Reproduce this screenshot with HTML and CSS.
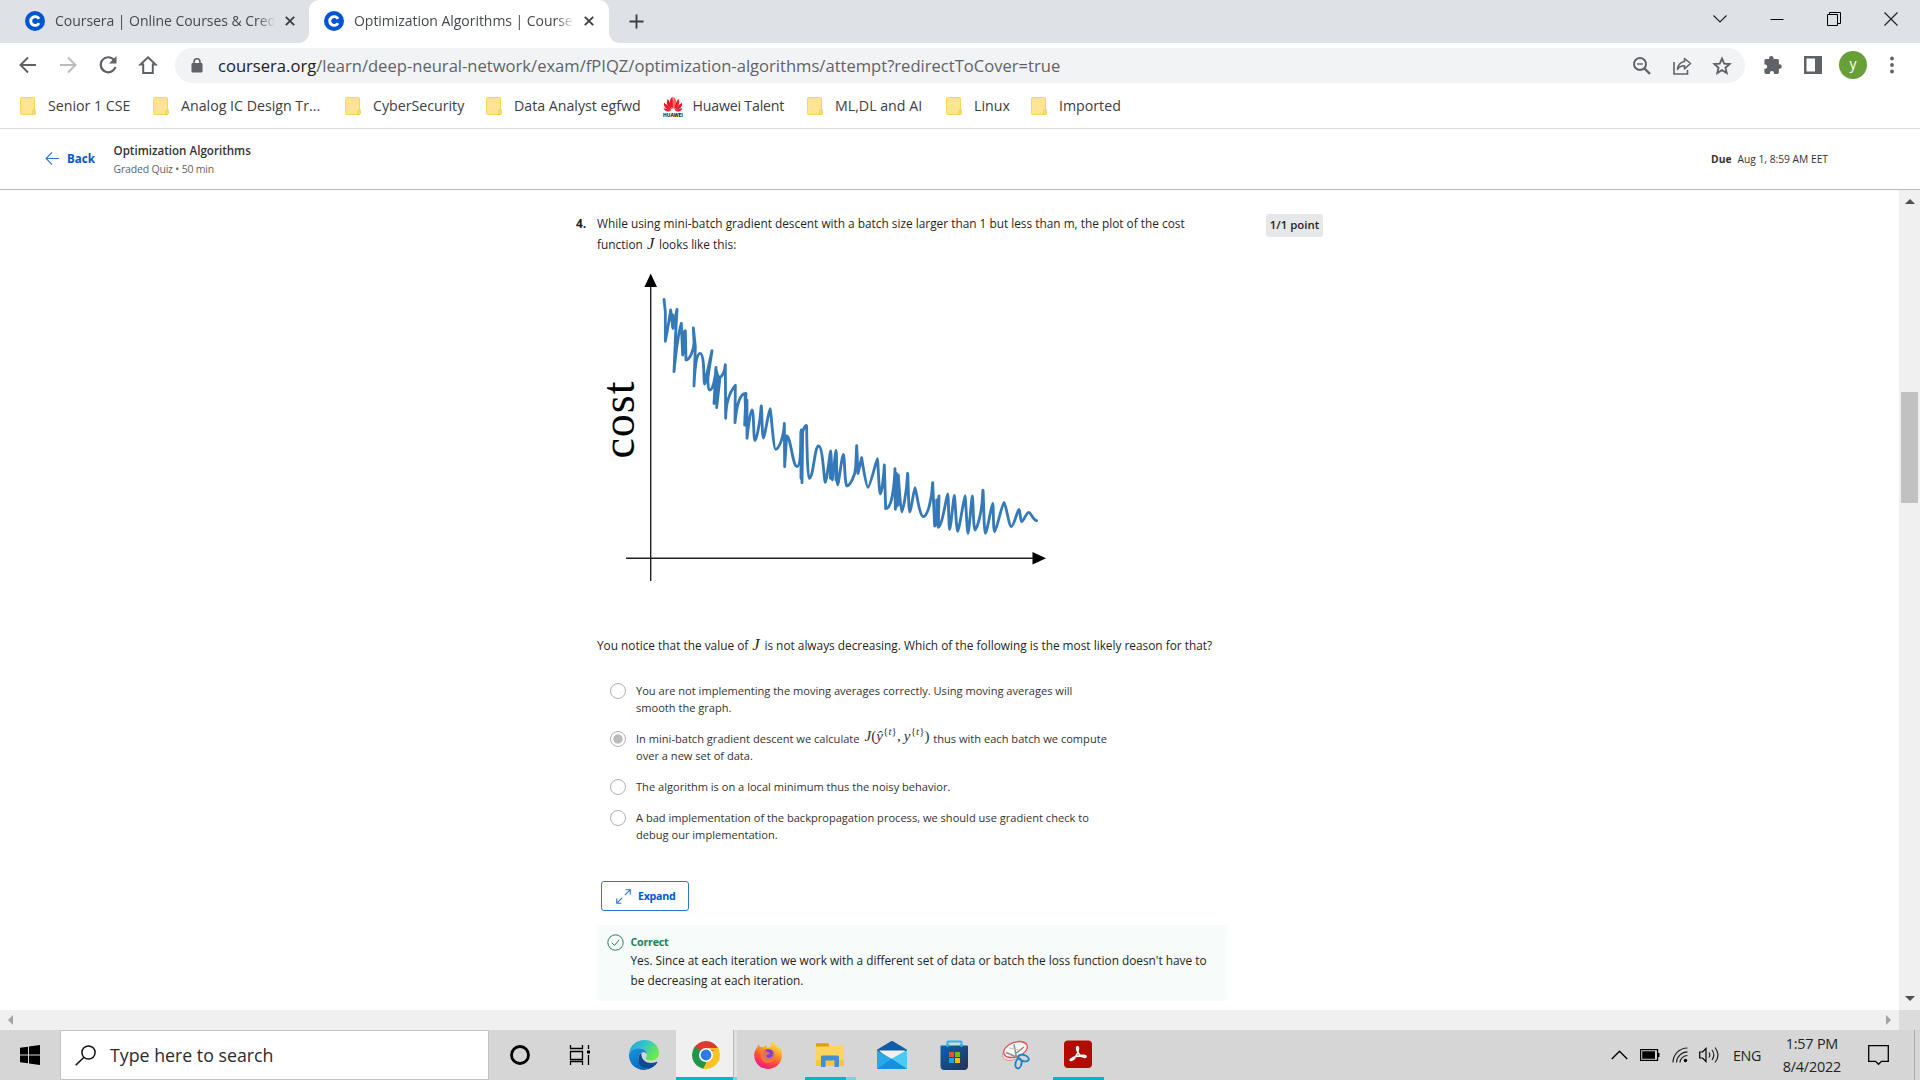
FILE: index.html
```html
<!DOCTYPE html>
<html lang="en">
<head>
<meta charset="utf-8">
<title>Optimization Algorithms | Coursera</title>
<link rel="stylesheet" href="styles.css">
</head>
<body>
<svg class="defs" aria-hidden="true">
  <symbol id="coursera" viewBox="0 0 20 20"><circle cx="10" cy="10" r="10" fill="#0056d2"/><path d="M14 12.1a4.4 4.4 0 1 1 0-4.2" fill="none" stroke="#fff" stroke-width="2.9"/></symbol>
  <symbol id="folder" viewBox="0 0 16 18"><path d="M1.500.5h12a1 1 0 0 1 1 1v10.500h.5v4.500a1 1 0 0 1-1 1h-12.500a1 1 0 0 1-1-1v-15a1 1 0 0 1 1-1z" fill="#ffe493" stroke="#f9d657"/><path d="M12.800 17.500v-3.300a1.200 1.200 0 0 1 2.400 0v2.300a1 1 0 0 1-1 1z" fill="#ffe493" stroke="#efc943"/></symbol>
  <symbol id="cross" viewBox="0 0 10 10"><path d="M.8.8l8.400 8.400M9.200.8L.8 9.200" stroke="currentColor" stroke-width="1.900" fill="none"/></symbol>
</svg>

<div class="tabs">
  <div class="tab">
    <svg class="favicon"><use href="#coursera"/></svg>
    <span class="tab-title">Coursera | Online Courses &amp; Cred</span>
    <svg class="tab-close"><use href="#cross"/></svg>
  </div>
  <div class="tab active">
    <svg class="favicon"><use href="#coursera"/></svg>
    <span class="tab-title">Optimization Algorithms | Course</span>
    <svg class="tab-close"><use href="#cross"/></svg>
  </div>
  <svg class="new-tab" viewBox="0 0 16 16"><path d="M8 .5v15M.5 8h15" stroke="#3c4043" stroke-width="2"/></svg>
  <div class="window-buttons">
    <svg viewBox="0 0 14 14"><path d="M.5 3.500L7 10l6.500-6.500" fill="none" stroke="#222" stroke-width="1.200"/></svg>
    <svg viewBox="0 0 14 14"><path d="M.5 7.500h13" stroke="#000"/></svg>
    <svg viewBox="0 0 14 14"><path d="M.5 2.500h10v11h-10zM2.500 2.500v-2h11v11h-3" fill="none" stroke="#000"/></svg>
    <svg viewBox="0 0 14 14"><path d="M.5.5l13 13M13.500.5l-13 13" stroke="#222" stroke-width="1.200"/></svg>
  </div>
</div>

<div class="toolbar">
  <div class="nav">
    <svg viewBox="0 0 20 20"><path d="M18 10H3M10 2.500L2.500 10l7.500 7.500" fill="none" stroke="#5f6368" stroke-width="2"/></svg>
    <svg viewBox="0 0 20 20"><path d="M2 10h15M10 2.500l7.500 7.500-7.500 7.500" fill="none" stroke="#babcbe" stroke-width="2"/></svg>
    <svg viewBox="0 0 20 20"><path d="M16.200 5.200a7.500 7.500 0 1 0 1.200 6.800" fill="none" stroke="#5f6368" stroke-width="2.200"/><path d="M18.500 1v7.500H11z" fill="#5f6368"/></svg>
    <svg viewBox="0 0 20 20"><path d="M10 2.300l7.500 7.200h-2.700v8.500H5.200V9.500H2.500z" fill="none" stroke="#5f6368" stroke-width="2"/></svg>
  </div>
  <div class="omnibox">
    <svg class="lock" viewBox="0 0 12 15"><rect x=".5" y="5" width="11" height="9.500" rx="1.200" fill="#5f6368"/><path d="M3 6V3.800a3 3 0 0 1 6 0V6" fill="none" stroke="#5f6368" stroke-width="1.600"/></svg>
    <span class="url"><b>coursera.org</b>/learn/deep-neural-network/exam/fPIQZ/optimization-algorithms/attempt?redirectToCover=true</span>
    <div class="page-actions">
      <svg viewBox="0 0 20 20"><circle cx="8" cy="8" r="6" fill="none" stroke="#5f6368" stroke-width="2"/><path d="M12.500 12.500l5.500 5.500" stroke="#5f6368" stroke-width="2.400"/><path d="M5.200 8h5.600" stroke="#5f6368" stroke-width="1.500"/></svg>
      <svg viewBox="0 0 20 20"><path d="M2 6v12h13.500v-4" fill="none" stroke="#5f6368" stroke-width="1.600"/><path d="M12.500 2.500l6 5-6 5.300V9.800c-3.500-.2-5.300 1.200-7 3.600.5-4.500 2.800-7.300 7-7.900z" fill="none" stroke="#5f6368" stroke-width="1.600" stroke-linejoin="round"/></svg>
      <svg viewBox="0 0 20 20"><path d="M10 2.600l2.200 5 5.400.5-4.100 3.600 1.200 5.300L10 14.200 5.300 17l1.200-5.300L2.400 8.100l5.400-.5z" fill="none" stroke="#5f6368" stroke-width="1.900"/></svg>
    </div>
  </div>
  <div class="extensions">
    <svg class="puzzle" viewBox="0 0 20 20"><path d="M8.300 1a2.300 2.300 0 0 1 2.300 2.300v.8h3.700a1.600 1.600 0 0 1 1.600 1.600v3.500h.6a2.300 2.300 0 0 1 0 4.600h-.6v3.500a1.600 1.600 0 0 1-1.600 1.600h-3.300v-.8a2.100 2.100 0 0 0-4.200 0v.8H3a1.600 1.600 0 0 1-1.600-1.600v-3.500h.7a2.100 2.100 0 0 0 0-4.200h-.7V5.700A1.600 1.600 0 0 1 3 4.100h3v-.8A2.300 2.300 0 0 1 8.300 1z" fill="#5f6368"/></svg>
    <svg class="panel" viewBox="0 0 18 18"><path d="M0 0h18v18H0z" fill="#5f6368"/><path d="M2.500 2.500h8.500v13H2.500z" fill="#fff"/></svg>
    <span class="avatar">y</span>
    <svg class="dots" viewBox="0 0 4 18"><circle cx="2" cy="2.500" r="1.900"/><circle cx="2" cy="9" r="1.900"/><circle cx="2" cy="15.500" r="1.900"/></svg>
  </div>
</div>

<div class="bookmarks">
  <a><svg><use href="#folder"/></svg>Senior 1 CSE</a>
  <a><svg><use href="#folder"/></svg>Analog IC Design Tr...</a>
  <a><svg><use href="#folder"/></svg>CyberSecurity</a>
  <a><svg><use href="#folder"/></svg>Data Analyst egfwd</a>
  <a class="huawei"><svg viewBox="0 0 20 21"><g fill="#e8192c"><path d="M9.700 13C6 9 6 3 9.500.7c.5 4 .6 8 .2 12.300z"/><path d="M10.300 13C14 9 14 3 10.500.7c-.5 4-.6 8-.2 12.300z" fill="#f4634e"/><path d="M8.900 13.300C4 10.500 2.600 6.500 4.800 2.700c2 3.100 3.500 6.600 4.100 10.600zM11.100 13.300c4.900-2.800 6.300-6.800 4.100-10.600-2 3.100-3.500 6.600-4.100 10.600z"/><path d="M8.400 14C3 13.500.2 10.500 1 6.700c3 1.700 5.600 4.200 7.400 7.300zM11.600 14c5.400-.5 8.200-3.500 7.400-7.300-3 1.700-5.600 4.200-7.400 7.300z"/><path d="M8.200 14.800C4.300 16.500 1.500 15 .5 12.300c2.700.3 5.300 1.100 7.700 2.500zM11.800 14.800c3.900 1.700 6.700.2 7.700-2.500-2.700.3-5.300 1.100-7.700 2.500z"/></g><text x="0" y="20.500" textLength="20" lengthAdjust="spacingAndGlyphs">HUAWEI</text></svg>Huawei Talent</a>
  <a><svg><use href="#folder"/></svg>ML,DL and AI</a>
  <a><svg><use href="#folder"/></svg>Linux</a>
  <a><svg><use href="#folder"/></svg>Imported</a>
</div>

<header class="quiz-header">
  <a class="back"><svg viewBox="0 0 16 16"><path d="M15 8H1.500M7.500 1.500L1.200 8l6.300 6.500" fill="none" stroke="#2a73e0" stroke-width="1.200"/></svg>Back</a>
  <div class="quiz-name"><h1>Optimization Algorithms</h1><p>Graded Quiz • 50 min</p></div>
  <div class="due"><b>Due</b><span>Aug 1, 8:59 AM EET</span></div>
</header>

<div class="viewport">
  <main>
    <section class="question">
      <div class="number">4.</div>
      <div class="prompt">While using mini-batch gradient descent with a batch size larger than 1 but less than m, the plot of the cost<br>function <i class="math">J</i> looks like this:</div>
      <div class="points">1/1 point</div>
    </section>

    <svg class="plot" viewBox="590 265 470 325">
      <path d="M650.700 284V581M626 558.300h410" stroke="#222" stroke-width="1.400"/>
      <path d="M650.700 273.500l6.300 13.500h-12.600zM1046 558.300l-13.500 6.300v-12.600z"/>
      <text class="axis-label" transform="translate(634 458.500) rotate(-90)" textLength="77">cost</text>
      <g class="curve" transform="translate(590 260) scale(.33333)">
        <path d="M222 118L226 155V244S238 180 242 150L249 205 261 148 257 220 252 335S262 230 274 190L278 285 286 212 288 300C296 300 313 275 312 245L310 204 316 260 312 378S315 280 330 280 340 372 344 372L366 272 354 350S352 390 360 390 378 350 378 322L372 430 386 350 380 443 390 352Q403 345 406 314L407 475Q408 408 436 376L435 488C440 430 452 398 468 400L464 495 471 420V535S480 450 486 450 490 542 495 542 511 480 513 444 516 534 520 534 537 446 540 446 550 568 557 568 581 540 583 490L584 620 590 528C602 528 608 620 621 620S632 540 634 510L636 668 638 518C640 503 650 490 650 500S652 655 657 655C671 655 673 558 686 558S702 667 706 667 720 573 722 573 725 660 727 660 736 571 738 571 740 675 743 675 756 583 760 583 764 678 771 678 796 650 797 622L800 557 804 640 815 593S828 682 834 682 860 596 862 596 867 702 871 702 881 650 883 615L887 746C905 746 913 680 915 626L916 748 925 645S932 756 935 756 950 700 952 650 955 756 959 756 972 683 975 683 988 770 1000 770 1026 720 1028 668L1034 798 1047 708 1045 802C1057 800 1070 702 1073 702S1076 808 1079 808 1091 706 1093 706 1099 814 1103 814 1123 707 1125 707 1131 820 1134 820 1145 708 1147 708 1150 810 1155 810 1176 760 1178 702 1181 820 1186 820 1205 730 1208 730 1209 815 1214 815 1237 727 1242 727 1257 800 1264 800 1283 748 1287 748 1290 785 1295 785 1309 757 1316 757 1330 782 1340 782"/>
        <path d="M248 165v35M280 215v65M378 330l6 20-8 80M633 515v140M919 640v100M925 660v75M1040 720v75M465 405l3 85M721 580v75M738 580v80"/>
      </g>
    </svg>

    <p class="notice">You notice that the value of <i class="math">J</i> is not always decreasing. Which of the following is the most likely reason for that?</p>

    <ul class="options">
      <li><span class="radio"></span><p>You are not implementing the moving averages correctly. Using moving averages will<br>smooth the graph.</p></li>
      <li><span class="radio checked"></span><p>In mini-batch gradient descent we calculate <span class="formula"><i>J</i>(<i>ŷ</i><sup>{<i>t</i>}</sup>,<i class="y">y</i><sup>{<i>t</i>}</sup>)</span> thus with each batch we compute<br>over a new set of data.</p></li>
      <li><span class="radio"></span><p>The algorithm is on a local minimum thus the noisy behavior.</p></li>
      <li><span class="radio"></span><p>A bad implementation of the backpropagation process, we should use gradient check to<br>debug our implementation.</p></li>
    </ul>

    <button class="expand"><svg viewBox="0 0 16 16"><path d="M9.500 6.500L15 1M10.200.8h5v5M6.500 9.500L1 15M.8 10.200v5h5" fill="none" stroke="#2a73e0" stroke-width="1.200"/></svg>Expand</button>

    <section class="feedback">
      <svg viewBox="0 0 17 17"><circle cx="8.500" cy="8.500" r="7.700" fill="none" stroke="#1f8354"/><path d="M4.800 8.800l2.700 2.700 4.700-5.700" fill="none" stroke="#1f8354"/></svg>
      <div><h2>Correct</h2><p>Yes. Since at each iteration we work with a different set of data or batch the loss function doesn't have to<br>be decreasing at each iteration.</p></div>
    </section>
  </main>
  <div class="vscroll"><i class="up"></i><i class="thumb"></i><i class="down"></i></div>
</div>
<div class="hscroll"><i class="left"></i><i class="right"></i><span></span></div>

<footer class="taskbar">
  <div class="start"><svg viewBox="0 0 20 20"><path d="M0 2.800L8 1.700v7.800H0zM9 1.500L20 0v9.500H9zM0 10.500h8v7.800L0 17.200zM9 10.500h11V20L9 18.500z"/></svg></div>
  <div class="search"><svg viewBox="0 0 21 21"><circle cx="13.500" cy="7.500" r="6.600" fill="none" stroke="#111" stroke-width="1.500"/><path d="M9 12.200L.7 20.300" stroke="#111" stroke-width="1.600"/></svg>Type here to search</div>
  <div class="app"><svg viewBox="0 0 30 30"><circle cx="15" cy="15" r="8.500" fill="none" stroke="#000" stroke-width="2.800"/></svg></div>
  <div class="app task-view"><svg viewBox="0 0 30 30"><path d="M5.500 5v3.500h12V5M5.500 11.500h12v8h-12zM5.500 25v-3.500h12V25M23.500 5v4M23.500 15v10" fill="none" stroke="#000" stroke-width="1.300"/><path d="M22 10.500h3v3h-3z"/></svg></div>
  <div class="app edge"><svg viewBox="0 0 30 30">
    <defs>
      <linearGradient id="e1" x1="0" y1="0" x2="1" y2=".5"><stop offset="0" stop-color="#249ddb"/><stop offset=".5" stop-color="#30c5cc"/><stop offset="1" stop-color="#6bea4d"/></linearGradient>
      <linearGradient id="e2" x1="0" y1="0" x2=".5" y2="1"><stop offset="0" stop-color="#1797e0"/><stop offset="1" stop-color="#0669c0"/></linearGradient>
    </defs>
    <path d="M0 14C.8 5 8 0 15.500 0 24 0 30 6 30 13c0 5-4 7.500-8 7.500-3.500 0-5.300-1-5.300-2 0-.8 1.300-1.500 1.300-4C18 10.500 14 8.200 9.800 8.200 4.800 8.200 1.500 10.500 0 14z" fill="url(#e1)"/>
    <path d="M0 14.500C1 10.500 5 8.200 9.500 8.200c4.500 0 8 2.300 8.500 5.800-3-4-9-1-8.800 5.300C9.400 25.500 15 30 20 29a14.800 14.800 0 0 1-5 1C6 30-.5 23 0 14.500z" fill="url(#e2)"/>
    <path d="M12.300 12.800c-4.500 3-5.300 16 7.200 16.300 4-.9 7-3.500 8.800-6.600.4-.7-.2-1-.8-.7-5.500 2.700-15.600 1.200-15.200-9z" fill="#0d4c93"/>
  </svg></div>
  <div class="app chrome"><svg viewBox="0 0 28 28">
    <path d="M14 14L1.900 7A14 14 0 0 1 26.100 7z" fill="#df3a2e"/><path d="M14 14L26.100 7A14 14 0 0 1 14 28z" fill="#fcc31e"/><path d="M14 14v14A14 14 0 0 1 1.900 7z" fill="#23944a"/>
    <path d="M14 7h12.100a14 14 0 0 1 1.200 2H18z" fill="#fcc31e"/><path d="M20.100 17.500L14 28l-2.800-.3 4-8z" fill="#fcc31e"/><path d="M7.900 17.500L1.900 7l1.300-1.800 6.200 5z" fill="#23944a"/>
    <circle cx="14" cy="14" r="7" fill="#fff"/><circle cx="14" cy="14" r="5.400" fill="#2e79ee"/>
  </svg></div>
  <div class="app firefox"><svg viewBox="0 0 28 28">
    <defs><linearGradient id="f1" x1=".8" y1="0" x2=".3" y2="1"><stop offset="0" stop-color="#fff04a"/><stop offset=".35" stop-color="#ffa42b"/><stop offset=".65" stop-color="#ff5036"/><stop offset="1" stop-color="#f0148c"/></linearGradient></defs>
    <path d="M3 6.500C3.500 5 4.300 4 5 3.500c.2 1.200.6 2 1.300 2.500 1.200-.2 2.500 0 3.500.3.600-1 1.700-2 3-2.300-.5 1-.5 2 0 3l4-1C16 4 17 1.300 19 0c.3 2.500 4.500 4 6 8 .5-.8.6-1.500.6-2 2 3 2.900 6 2.300 10C27 23 21 28 14 28S.8 22.500.3 15.500C0 12 1 9 3 6.500z" fill="url(#f1)"/>
    <circle cx="14.300" cy="14" r="6" fill="#7a3fe0"/><path d="M6.500 9.500c2-1.500 4.500-.8 6.500.9 1.500.8 3 1 3 2-1.200.8-2.800 1-3.500 2.200-.5 1.500 1.200 2.600 3.300 2.200 2.300-.6 3.600-2.600 2.800-6 3.600 4 2.400 10.500-4.600 11.200C9 22.500 5.500 17.500 6.500 9.500z" fill="#ff862b" opacity=".75"/>
  </svg></div>
  <div class="app explorer"><svg viewBox="0 0 28 28">
    <path d="M0 2.500h12l1.500 2H27a1 1 0 0 1 1 1V25H0z" fill="#ffd45e"/><path d="M0 3a.8.800 0 0 1 .8-.8h11.400L13 3v2.500H0z" fill="#e0a008"/><path d="M0 19h28v6H0z" fill="#f9c63f"/>
    <path d="M5 26V16a1.500 1.500 0 0 1 1.500-1.500h15A1.500 1.500 0 0 1 23 16v10h-4.500v-6.500h-9V26z" fill="#3f8fd2"/>
  </svg></div>
  <div class="app"><svg viewBox="0 0 30 30">
    <path d="M0 9.800L14 1.300a2 2 0 0 1 2 0L30 9.800V20H0z" fill="#0f5ca8"/><path d="M2 10.500h26v9L15 22z" fill="#f1f1f1"/><path d="M0 10.300L15 19 30 10.300V29H0z" fill="#28a8e6"/><path d="M30 10.300V29L14.500 18.700z" fill="#4cc9f5"/><path d="M0 29l14.500-10.300L30 29z" fill="#1790dc"/>
  </svg></div>
  <div class="app"><svg viewBox="0 0 30 30">
    <defs><linearGradient id="s1" x1="0" y1="0" x2="1" y2="1"><stop offset="0" stop-color="#0a63ad"/><stop offset="1" stop-color="#253252"/></linearGradient></defs>
    <path d="M8.500 8V2.300A.8.800 0 0 1 9.300 1.500h12.400a.8.800 0 0 1 .8.800V8" fill="none" stroke="#27b7f1" stroke-width="2"/>
    <path d="M2 5.500h26a1 1 0 0 1 1 1V26a4 4 0 0 1-4 4H5.500a4 4 0 0 1-4-4V6.500a1 1 0 0 1 .5-1z" fill="url(#s1)"/><path d="M8.500 4v3M22.500 4v3" stroke="#27b7f1" stroke-width="2"/>
    <path d="M10 12h5v5h-5z" fill="#f35022"/><path d="M16 12h5v5h-5z" fill="#7fba00"/><path d="M10 18h5v5h-5z" fill="#10a5f0"/><path d="M16 18h5v5h-5z" fill="#ffba08"/>
  </svg></div>
  <div class="app"><svg viewBox="0 0 30 30">
    <ellipse cx="11" cy="13.500" rx="10" ry="6.500" transform="rotate(-20 11 13.500)" fill="#e8dede" stroke="#e59a9a"/><ellipse cx="14.500" cy="9.500" rx="12.300" ry="7.200" transform="rotate(-20 14.500 9.500)" fill="#f6f6f6" stroke="#dd5555" stroke-width="1.300"/>
    <path d="M13 4.500l2.500 13M5 12.500l11.500 5M14 14l9-7" stroke="#8a8f94" stroke-width="1.500"/><path d="M8 8l10 2" stroke="#c4c8cb"/>
    <ellipse cx="22.500" cy="18" rx="5.500" ry="3" transform="rotate(20 22.500 18)" fill="none" stroke="#2082c5" stroke-width="1.900"/><ellipse cx="17.500" cy="23.500" rx="3" ry="5" transform="rotate(12 17.500 23.500)" fill="none" stroke="#2082c5" stroke-width="1.900"/>
  </svg></div>
  <div class="app acrobat"><svg viewBox="0 0 30 30"><rect x="1" y=".5" width="28" height="27.500" rx="4" fill="#b30b00"/><path d="M8 20.500c-2.500 0 1-3 6-4.200s9.500-1.300 9 .4c-.5 1.600-4.500.4-7-2.700s-3-7.300-1.500-7.300c1.700 0 1 4.300-.8 8s-4.200 5.800-5.700 5.800z" fill="none" stroke="#fff" stroke-width="1.600"/></svg></div>

  <div class="tray">
    <svg class="t-chev" viewBox="0 0 17 10"><path d="M.8 9L8.500 1.300 16.200 9" fill="none" stroke="#000" stroke-width="1.400"/></svg>
    <svg class="t-batt" viewBox="0 0 20 12"><path d="M.6.600h17v10.800H.6z" fill="none" stroke="#000" stroke-width="1.200"/><path d="M2.200 2.200h12.800v7.600H2.200zM18 4h1.500v4H18z"/></svg>
    <svg class="t-wifi" viewBox="0 0 16 16"><path d="M1 15.500C1 8 7 1 15.500 1M4.500 15.500C4.500 10 9.500 4.800 15.500 4.800M8 15.500c0-3.500 3.500-7 7.500-7" fill="none" stroke="#222" stroke-width="1.200"/><circle cx="13.500" cy="13.500" r="1.700"/></svg>
    <svg class="t-vol" viewBox="0 0 21 18"><path d="M.7 6h2.800L7 2.500v13L3.500 12H.7z" fill="none" stroke="#000" stroke-width="1.200"/><path d="M10 6.500q1.600 2.500 0 5M13 4q3.600 5 0 10M16 1.500q6 7.500 0 15" fill="none" stroke="#222" stroke-width="1.200"/></svg>
    <span class="lang">ENG</span>
    <div class="clock"><span>1:57 PM</span><span>8/4/2022</span></div>
    <svg class="t-note" viewBox="0 0 21 21"><path d="M.7.700h19.600v15.600h-6.800l-3 3-3-3H.7z" fill="none" stroke="#000" stroke-width="1.300"/></svg>
  </div>
</footer>
</body>
</html>
```
FILE: styles.css
```css
* { box-sizing: border-box; margin: 0; padding: 0; }
body {
  width: 1920px; height: 1080px; overflow: hidden;
  display: flex; flex-direction: column;
  background: #fff; color: #1f1f1f;
  font-family: "Open Sans", "Noto Sans", sans-serif;
}
svg { display: block; flex: none; }
i { font-style: normal; }
.defs { display: none; }

/* tab strip */
.tabs { flex: none; height: 43px; display: flex; align-items: center; background: #dee1e6; }
.tab { position: relative; width: 309px; height: 43px; padding: 0 14px 1px 25px; display: flex; align-items: center; color: #45494d; }
.tab.active { width: 300px; background: #fff; border-radius: 10px 10px 0 0; padding-left: 15px; padding-right: 15px; }
.tab.active::before, .tab.active::after { content: ""; position: absolute; bottom: 0; width: 10px; height: 10px; }
.tab.active::before { left: -10px; background: radial-gradient(circle at 0 0, transparent 9.5px, #fff 10px); }
.tab.active::after { right: -10px; background: radial-gradient(circle at 100% 0, transparent 9.5px, #fff 10px); }
.favicon { width: 20px; height: 20px; }
.tab-title {
  width: 219px; margin-left: 10px; padding-bottom: 2px; white-space: nowrap;
  font-size: 14px; letter-spacing: -.04px;
  -webkit-mask-image: linear-gradient(90deg, #000 202px, transparent 221px);
  mask-image: linear-gradient(90deg, #000 202px, transparent 221px);
}
.tab-close { width: 10px; height: 10px; margin-left: 11px; color: #3c4043; }
.new-tab { width: 15px; height: 15px; margin-left: 20px; }
.window-buttons { margin-left: auto; display: flex; gap: 43px; padding: 0 22px 6px 0; }
.window-buttons svg { width: 14px; height: 14px; }

/* address bar */
.toolbar { flex: none; height: 44px; display: flex; align-items: center; }
.nav { width: 175px; padding-left: 18px; display: flex; gap: 20px; }
.nav svg { width: 20px; height: 20px; }
.omnibox { width: 1570px; height: 35px; border-radius: 18px; background: #f1f3f4; display: flex; align-items: center; margin-top: 1px; }
.lock { width: 12px; height: 15px; margin-left: 16px; }
.url { margin-left: 15px; font-size: 16.590px; color: #5f6368; white-space: nowrap; }
.url b { font-weight: 400; color: #202124; }
.page-actions { margin-left: auto; padding-right: 13px; display: flex; gap: 20px; }
.page-actions svg { width: 20px; height: 20px; }
.extensions { display: flex; align-items: center; }
.puzzle { width: 20px; height: 20px; margin-left: 18px; }
.panel { width: 18px; height: 18px; margin-left: 21px; }
.avatar { width: 28px; height: 28px; margin-left: 17px; border-radius: 50%; background: #689f38; color: #fff; font-size: 14px; line-height: 25px; text-align: center; }
.dots { width: 4px; height: 18px; margin-left: 23px; fill: #5f6368; }

/* bookmarks */
.bookmarks {
  flex: none; height: 42px; padding: 0 0 3px 20px; border-bottom: 1px solid #dadcde;
  display: grid; grid-template-columns: 133px 192px 141px 177px 144px 139px 85px 120px; align-items: center;
}
.bookmarks a { display: grid; grid-template-columns: 28px auto; align-items: center; justify-content: start; font-size: 14.200px; line-height: 20px; color: #3c4043; white-space: nowrap; }
.bookmarks svg { width: 16px; height: 18px; }
.bookmarks .huawei { grid-template-columns: 29.5px auto; letter-spacing: -.2px; }
.huawei svg { width: 20px; height: 21px; }
.huawei text { font-size: 4.500px; font-weight: 700; letter-spacing: 0; }

/* quiz header */
.quiz-header { flex: none; height: 61px; padding: 0 92px 0 45px; border-bottom: 1px solid #b9b9b9; display: flex; align-items: center; }
.back { width: 68.5px; padding-bottom: 1px; display: flex; align-items: center; gap: 7px; color: #0056d2; font-size: 11.600px; font-weight: 700; }
.back svg { width: 15px; height: 15px; }
.quiz-name { margin-top: 1px; }
.quiz-name h1 { font-size: 11.600px; line-height: 18px; font-weight: 600; color: #333; }
.quiz-name p { font-size: 10.500px; line-height: 18px; letter-spacing: -.19px; color: #636363; }
.due { margin-left: auto; display: flex; gap: 6px; font-size: 10.250px; color: #333; }

/* page body */
.viewport { flex: none; height: 820px; display: flex; }
main { width: 1899px; padding: 23px 0 0 576px; }
.question { display: grid; grid-template-columns: 21px 669px 57px; font-size: 11.850px; line-height: 20.500px; white-space: nowrap; }
.number { font-weight: 700; }
.points { height: 23px; margin-top: 1px; border-radius: 3px; background: #e5e7e8; font-size: 11.400px; line-height: 22px; font-weight: 600; text-align: center; }
.math { display: inline-block; width: 9px; margin-left: 1px; font: italic 16.500px/0 "Liberation Serif", serif; }
.plot { width: 470px; height: 325px; margin: 11px 0 0 14px; }
.axis-label { font: 46px "Liberation Serif", serif; }
.curve { fill: none; stroke: #3579b8; stroke-width: 8.500; stroke-linecap: round; stroke-linejoin: round; }
.notice { margin: 45px 0 0 21px; font-size: 11.850px; line-height: 21px; white-space: nowrap; }
.options { list-style: none; margin: 26px 0 0 34px; display: flex; flex-direction: column; gap: 14px; }
.options li { display: flex; gap: 10px; font-size: 11.080px; line-height: 17px; color: #333; white-space: nowrap; }
.radio { width: 16px; height: 16px; margin-top: 1px; border: 1.500px solid #b0b0b0; border-radius: 50%; }
.radio.checked { background: radial-gradient(circle, #bbb 4.300px, transparent 5px); }
.formula { display: inline-block; width: 66px; margin: 0 1px; position: relative; top: -2px; left: 1px; font: 15px/0 "Liberation Serif", serif; letter-spacing: .1px; }
.formula i { font-style: italic; }
.formula .y { margin-left: 3px; }
.formula sup { font-size: 11px; line-height: 0; vertical-align: 6px; }
.expand {
  width: 88px; height: 30px; margin: 38px 0 0 25px; padding-left: 14px;
  display: flex; align-items: center; gap: 7px;
  border: 1px solid #2a73e0; border-radius: 3px; background: #fff; color: #0056d2;
  font: 700 10.700px "Open Sans", sans-serif; letter-spacing: -.3px;
}
.expand svg { width: 15px; height: 15px; }
.feedback { width: 630px; height: 76px; margin: 14px 0 0 21px; padding: 8px 0 0 10px; background: #f7fbf9; display: flex; gap: 6.500px; white-space: nowrap; }
.feedback svg { width: 17px; height: 17px; margin-top: 1px; }
.feedback h2 { font-size: 10.700px; line-height: 17px; padding-top: 1px; letter-spacing: -.22px; color: #1f8354; }
.feedback p { margin-top: -1px; font-size: 11.830px; line-height: 20px; }

/* scrollbars */
.vscroll { width: 21px; background: #f0f0f0; display: flex; flex-direction: column; align-items: center; padding: 9px 0; }
.up, .down { border: 5px solid transparent; border-top-width: 0; border-bottom: 5px solid #505050; }
.down { border-top: 5px solid #505050; border-bottom-width: 0; margin-top: auto; }
.thumb { width: 17px; height: 111px; margin-top: 188px; background: #c1c1c1; }
.hscroll { flex: none; height: 20px; background: #f0f0f0; display: flex; align-items: center; padding-left: 8px; }
.left, .right { border: 5px solid transparent; }
.left { border-left-width: 0; border-right-color: #a3a3a3; }
.right { border-right-width: 0; border-left-color: #a3a3a3; margin-left: auto; }
.hscroll span { width: 21px; height: 20px; margin-left: 8px; background: #dcdcdc; }

/* taskbar */
.taskbar { flex: none; height: 50px; display: flex; background: #d6d6d6; }
.start { width: 60px; display: flex; align-items: center; justify-content: center; }
.start svg { width: 20px; height: 20px; }
.search { width: 429px; border: 1px solid #c3c3c3; background: #fff; display: flex; align-items: center; gap: 14px; padding-left: 14px; font-size: 17.770px; color: #2b2b2b; }
.search svg { width: 21px; height: 21px; }
.app { width: 62px; display: flex; align-items: center; justify-content: center; position: relative; }
.app svg { width: 30px; height: 30px; }
.task-view { width: 58px; }
.edge { margin-left: 4px; }
.chrome { background: linear-gradient(90deg, #d6d6d6 1px, #f0f0f0 1px 58px, #b9b9b9 58px 59px, #e0e0e0 59px); }
.chrome svg, .firefox svg, .explorer svg { width: 28px; height: 28px; }
.chrome::after, .explorer::after, .acrobat::after { content: ""; position: absolute; bottom: 0; height: 3px; background: #00b7c3; }
.chrome::after { left: 1px; width: 61px; background: linear-gradient(90deg, #00b7c3 57px, #6fd8de 57px); }
.explorer::after { left: 6px; width: 51px; background: linear-gradient(90deg, #00b7c3 41px, #6fd8de 41px); }
.acrobat::after { left: 6px; width: 51px; }
.tray { margin-left: auto; width: 308px; display: flex; align-items: center; border-right: 1px solid #aaa; margin-right: 5px; }
.t-chev { width: 17px; height: 10px; margin-left: 4px; }
.t-batt { width: 20px; height: 12px; margin-left: 12px; }
.t-wifi { width: 16px; height: 16px; margin-left: 12px; }
.t-vol { width: 21px; height: 18px; margin-left: 11px; }
.lang { margin-left: 13px; font-size: 14.300px; letter-spacing: -.4px; }
.clock { width: 64px; margin-left: 19px; font-size: 14.400px; line-height: 23px; letter-spacing: -.2px; text-align: center; }
.clock span { display: block; }
.t-note { width: 21px; height: 21px; margin-left: 24px; }
```
